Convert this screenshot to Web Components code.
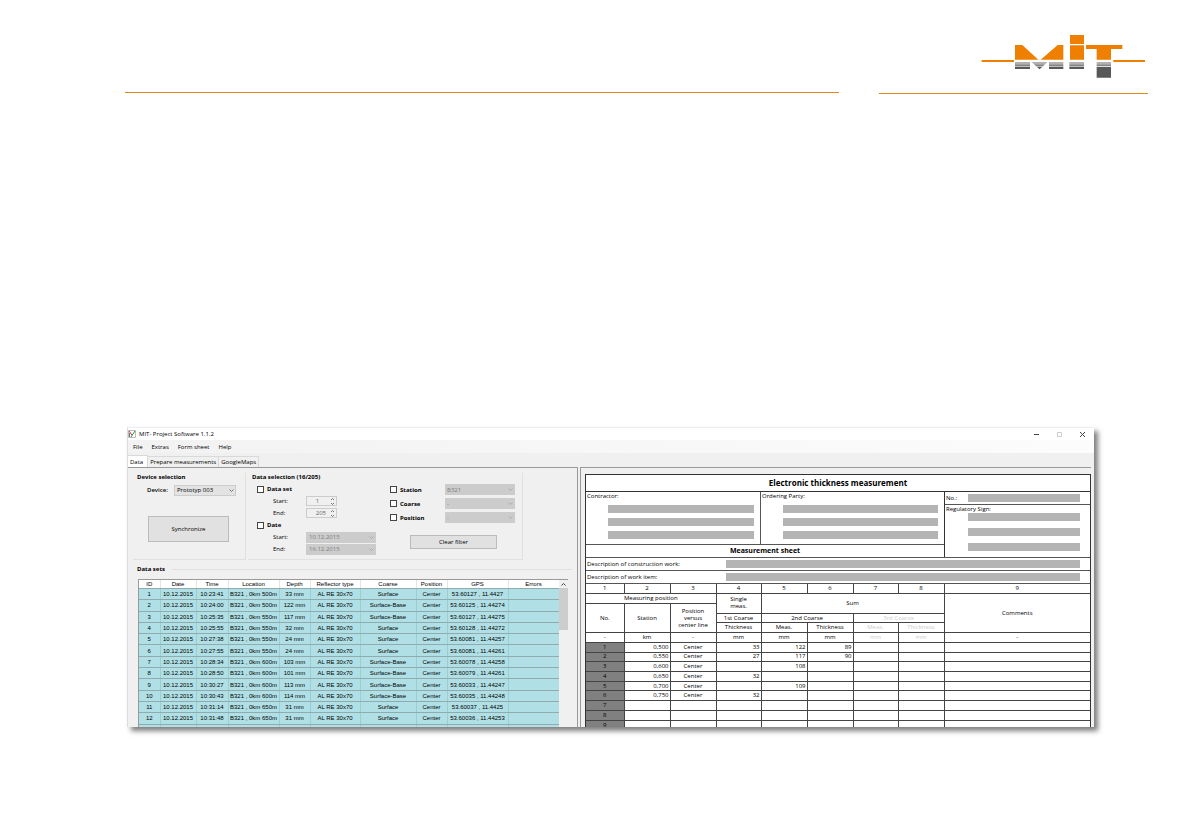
<!DOCTYPE html>
<html lang="en">
<head>
<meta charset="utf-8">
<title>MIT - Project Software</title>
<style>
  body {
    margin: 0;
    background: #fff;
    color: #000;
    font: 6px/8px "Open Sans", "Noto Sans", sans-serif;
  }
</style>
</head>
<body>
<manual-page>
  <mit-logo slot="logo"></mit-logo>
  <app-window caption="MIT- Project Software 1.1.2">
    <menu-bar slot="menu" items="File,Extras,Form sheet,Help"></menu-bar>
    <tab-strip slot="tabs" items="Data,Prepare measurements,GoogleMaps"></tab-strip>
    <data-pane slot="left"></data-pane>
    <measurement-sheet slot="right"></measurement-sheet>
  </app-window>
</manual-page>

<script>
const define = (name, render) => window.customElements.define(name, class extends HTMLElement {
  constructor() {
    super();
    this.attachShadow({ mode: 'open' }).innerHTML = `<style>
  * { box-sizing: border-box; }
  button, select, input { font: inherit; color: inherit; margin: 0; }
</style>${render(this)}`;
  }
});

/* Page with the two header rules and the logo */
define('manual-page', () => `<style>
  :host {
    display: flex;
    flex-direction: column;
    height: 100vh;
    box-sizing: border-box;
    padding-bottom: 112px;
    overflow: hidden;
  }

  header {
    display: grid;
    grid-template-columns: minmax(0, 1fr) 269px;
    column-gap: 40px;
    padding: 34px 43px 0 125px;
    flex: none;
  }

  .rule {
    border-bottom: 1px solid #e08a1c;
    height: 59px;
  }

  .brand {
    height: 60px;
    padding-left: 102px;
  }

  main {
    display: grid;
    grid-template-rows: minmax(0, 1fr);
    flex: 1;
    min-height: 0;
    margin: 333px 97px 0 127px;
  }
</style>
<header>
  <div class="rule"></div>
  <div class="rule brand"><slot name="logo"></slot></div>
</header>
<main><slot></slot></main>`);

define('mit-logo', () => `<style>
  :host { display: block; }
  svg { display: block; }
</style>
<svg width="165" height="45" viewBox="33 42 495 135" role="img" aria-label="MIT">
  <g fill="#ee7f00">
    <path d="M35 120h97v6H35zM430 120h95v6h-95z" />
    <path d="M135 75h22l48 44H135zM263 75h17v44h-68z" />
    <path d="M300 45h42v27h-42zM300 76h42v43h-42z" />
    <path d="M348 75h109v12h-34v32h-43V87h-32z" />
  </g>
  <g fill="#b3b0b2"><path d="M135 126h45v6h-45zM185 126h47l-6 6h-35zM237 126h43v6h-43zM298 126h44v6h-44zM380 126h43v6h-43z" /></g>
  <g fill="#858386"><path d="M135 133h45v6h-45zM192 133h33l-6 6h-21zM237 133h43v6h-43zM298 133h44v6h-44zM380 133h43v6h-43z" /></g>
  <g fill="#58585a"><path d="M135 140h45v7h-45zM200 140h17l-8 8zM237 140h43v7h-43zM298 140h44v7h-44zM380 141h43v32h-43z" /></g>
</svg>`);

/* Desktop window: caption bar, menu, tabs and two panes */
define('app-window', el => `<style>
  :host {
    display: flex;
    flex-direction: column;
    min-width: 0;
    background: #f0f0f0;
    border-top: 1px solid #eee;
    border-left: 1px solid #ddd;
    box-shadow: 4px 4px 5px rgba(0, 0, 0, .5);
  }

  .caption {
    display: flex;
    align-items: center;
    gap: 3px;
    height: 12px;
    padding-right: 8px;
    background: #fff;
    flex: none;
  }

  .title {
    flex: 1;
  }

  .caption button {
    display: block;
    padding: 0;
    border: 0;
    background: none;
    width: 7px;
    height: 7px;
    margin-left: 13px;
  }

  svg {
    display: block;
    fill: none;
    stroke: #444;
  }

  .panes {
    display: grid;
    grid-template-columns: 450px minmax(0, 1fr);
    grid-template-rows: minmax(0, 1fr);
    column-gap: 2px;
    padding-right: 3px;
    flex: 1;
    min-height: 0;
  }
</style>
<div class="caption">
  <svg width="8" height="8" viewBox="0 0 8 8">
    <path stroke="#bbb" d="M.5.5h7v7h-7z" />
    <path stroke="#c33" d="M1 1l3 4" />
    <path stroke="#2a8a4a" d="M3 7l4-6" />
    <path stroke="#777" d="M1.500 3v4" />
  </svg>
  <span class="title">${el.getAttribute('caption')}</span>
  <button aria-label="Minimize"><svg width="7" height="7"><path d="M1 3.500h5" /></svg></button>
  <button aria-label="Maximize"><svg width="7" height="7"><path stroke="#ccc" d="M1.500 1.500h4v4h-4z" /></svg></button>
  <button aria-label="Close"><svg width="7" height="7"><path d="M1 1l5 5M6 1L1 6" /></svg></button>
</div>
<slot name="menu"></slot>
<slot name="tabs"></slot>
<div class="panes">
  <slot name="left"></slot>
  <slot name="right"></slot>
</div>`);

define('menu-bar', el => `<style>
  :host {
    display: flex;
    align-items: center;
    gap: 9px;
    height: 13px;
    padding-left: 5px;
    background: linear-gradient(90deg, #f2f2f2, #fcfcfc);
    flex: none;
  }

  button {
    padding: 0;
    border: 0;
    background: none;
  }
</style>
${el.getAttribute('items').split(',').map(item => `<button>${item}</button>`).join('')}`);

define('tab-strip', el => `<style>
  :host {
    display: flex;
    align-items: flex-end;
    height: 14px;
    box-sizing: border-box;
    flex: none;
  }

  button {
    height: 11px;
    padding: 0 2px;
    border: 1px solid #d9d9d9;
    border-bottom: 0;
    border-left: 0;
    background: #f0f0f0;
  }

  button[aria-selected="true"] {
    height: 12px;
    padding: 0 4px 0 2px;
    background: #fff;
  }
</style>
${el.getAttribute('items').split(',').map((item, i) => `<button role="tab" aria-selected="${i === 0}">${item}</button>`).join('')}`);

define('group-box', el => `<style>
  :host {
    display: block;
    box-sizing: border-box;
    border: 1px solid #e0e0e0;
    border-width: 0 1px 1px 0;
  }

  h2 {
    margin: 0 0 2px;
    padding-left: 4px;
    font: inherit;
    font-weight: 700;
  }
</style>
<h2>${el.getAttribute('heading')}</h2>
<slot></slot>`);

const chevron = `<svg class="chevron" width="5" height="3" viewBox="0 0 5 3"><path d="M.5.5l2 2 2-2" /></svg>`;

/* One label with its control: kind is "select", "spin" or "date" */
define('form-field', el => {
  const kind = el.getAttribute('kind');
  const value = el.getAttribute('value');
  const controls = {
    select: `<select id="c"><option>${value}</option></select>${chevron}`,
    spin: `<input id="c" value="${value}" disabled><svg class="chevron" width="5" height="7" viewBox="0 0 5 7"><path d="M1 2l1.500-1.500L4 2M1 5l1.500 1.500L4 5" /></svg>`,
    date: `<select id="c" disabled><option>${value}</option></select>${chevron}`
  };
  return `<style>
  :host {
    display: flex;
    align-items: center;
    height: 12px;
  }

  label {
    width: var(--label-width, 33px);
    font-weight: var(--label-weight, 400);
    flex: none;
  }

  .control {
    display: grid;
    align-items: center;
    width: var(--control-width, 70px);
  }

  .control > * {
    grid-area: 1 / 1;
  }

  select, input {
    appearance: none;
    width: 100%;
    height: 11px;
    padding: 0 2px;
    border: 1px solid #ccc;
    border-radius: 0;
    background: #e3e3e3;
    opacity: 1;
  }

  select:disabled {
    background: #ccc;
    color: #808080;
  }

  input {
    height: 10px;
    padding-right: 10px;
    background: #f0f0f0;
    color: #666;
    text-align: ${value.length > 1 ? 'right' : 'center'};
  }

  .chevron {
    justify-self: end;
    margin-right: 2px;
    fill: none;
    stroke: ${kind === 'date' ? '#aaa' : '#777'};
    pointer-events: none;
  }
</style>
<label for="c">${el.getAttribute('label')}</label>
<span class="control">${controls[kind]}</span>`;
});

/* Filter tick box, with a drop-down after it when a value is given */
define('check-field', el => {
  const label = el.getAttribute('label');
  return `<style>
  :host {
    display: flex;
    align-items: center;
    gap: 3px;
    height: var(--row, 12px);
    font-weight: 700;
  }

  input {
    appearance: none;
    width: 7px;
    height: 7px;
    border: 1px solid #444;
    background: #fff;
    flex: none;
  }

  label {
    width: 42px;
    white-space: nowrap;
  }

  .control {
    display: grid;
    align-items: center;
    font-weight: 400;
    flex: 1;
  }

  .control > * {
    grid-area: 1 / 1;
  }

  select {
    appearance: none;
    height: 11px;
    padding: 0 2px;
    border: 0;
    border-radius: 0;
    background: #ccc;
    color: #808080;
    opacity: 1;
  }

  .chevron {
    justify-self: end;
    margin-right: 2px;
    fill: none;
    stroke: #aaa;
  }
</style>
<input type="checkbox" id="c"><label for="c">${label}</label>
${el.hasAttribute('value') ? `<span class="control"><select aria-label="${label} value" disabled><option>${el.getAttribute('value')}</option></select>${chevron}</span>` : ''}`;
});

/* Left pane: device, filters and the stored measurements */
define('data-pane', () => `<style>
  :host {
    display: flex;
    flex-direction: column;
    box-sizing: border-box;
    min-height: 0;
    padding: 5px 5px 0;
    border: 1px solid #999;
    border-width: 1px 1px 0 0;
    overflow: hidden;
  }

  .groups {
    display: grid;
    grid-template-columns: 113px 275px;
    column-gap: 2px;
    height: 87px;
    flex: none;
  }

  .device {
    --label-width: 27px;
    --label-weight: 600;
    --control-width: 62px;
    padding: 1px 0 0 14px;
  }

  button {
    display: block;
    padding: 0;
    border: 1px solid #bbb;
    background: #e1e1e1;
  }

  .sync {
    width: 81px;
    height: 26px;
    margin: 20px 0 0 1px;
  }

  .filters {
    display: grid;
    grid-template-columns: 119px 125px;
    column-gap: 14px;
    padding-left: 9px;
  }

  .indent {
    padding-left: 16px;
  }

  .spin {
    --control-width: 31px;
  }

  .values {
    --row: 11px;
    display: flex;
    flex-direction: column;
    gap: 3px;
    padding-top: 1px;
  }

  .clear {
    width: 87px;
    height: 14px;
    margin: 9px 0 0 20px;
  }

  h2 {
    display: flex;
    align-items: center;
    gap: 7px;
    margin: 5px 0 6px;
    padding-left: 4px;
    font: inherit;
    font-weight: 700;
  }

  h2::after {
    content: "";
    flex: 1;
    border-top: 1px solid #e0e0e0;
  }

  data-sets {
    margin: 0 4px 0 5px;
    flex: 1;
    min-height: 0;
  }
</style>
<div class="groups">
  <group-box heading="Device selection">
    <div class="device">
      <form-field kind="select" label="Device:" value="Prototyp 003"></form-field>
      <button class="sync">Synchronize</button>
    </div>
  </group-box>
  <group-box heading="Data selection (16/205)">
    <div class="filters">
      <div>
        <check-field label="Data set"></check-field>
        <div class="indent spin">
          <form-field kind="spin" label="Start:" value="1"></form-field>
          <form-field kind="spin" label="End:" value="205"></form-field>
        </div>
        <check-field label="Date"></check-field>
        <div class="indent">
          <form-field kind="date" label="Start:" value="10.12.2015"></form-field>
          <form-field kind="date" label="End:" value="16.12.2015"></form-field>
        </div>
      </div>
      <div class="values">
        <check-field label="Station" value="B321"></check-field>
        <check-field label="Coarse" value="-"></check-field>
        <check-field label="Position" value="-"></check-field>
        <button class="clear">Clear filter</button>
      </div>
    </div>
  </group-box>
</div>
<h2>Data sets</h2>
<data-sets></data-sets>`);

const dataSets = [
  ['10:23:41', '500', 33, 'Surface', '53.60127 , 11.4427'],
  ['10:24:00', '500', 122, 'Surface-Base', '53.60125 , 11.44274'],
  ['10:25:35', '550', 117, 'Surface-Base', '53.60127 , 11.44275'],
  ['10:25:55', '550', 32, 'Surface', '53.60128 , 11.44272'],
  ['10:27:38', '550', 24, 'Surface', '53.60081 , 11.44257'],
  ['10:27:55', '550', 24, 'Surface', '53.60081 , 11.44261'],
  ['10:28:34', '600', 103, 'Surface-Base', '53.60078 , 11.44258'],
  ['10:28:50', '600', 101, 'Surface-Base', '53.60079 , 11.44261'],
  ['10:30:27', '600', 113, 'Surface-Base', '53.60033 , 11.44247'],
  ['10:30:43', '600', 114, 'Surface-Base', '53.60035 , 11.44248'],
  ['10:31:14', '650', 31, 'Surface', '53.60037 , 11.4425'],
  ['10:31:48', '650', 31, 'Surface', '53.60036 , 11.44253']
];

const headings = ['ID', 'Date', 'Time', 'Location', 'Depth', 'Reflector type', 'Coarse', 'Position', 'GPS', 'Errors'];
const cells = values => values.map(value => `<td>${value}</td>`).join('');

define('data-sets', () => `<style>
  :host {
    display: flex;
    align-items: stretch;
    overflow: hidden;
    border-top: 1px solid #999;
    border-left: 1px solid #999;
    font-family: "Liberation Sans", Arial, sans-serif;
  }

  .view {
    flex: 1;
    min-width: 0;
    overflow: hidden;
  }

  table {
    width: 100%;
    height: 156px;
    border-collapse: collapse;
    table-layout: fixed;
  }

  th, td {
    padding: 0;
    text-align: center;
    white-space: nowrap;
    font-weight: 400;
    border-right: 1px solid #9ccdd0;
    border-bottom: 1px solid #8fabad;
  }

  th {
    background: #fff;
    border-right-color: #e5e5e5;
  }

  td {
    background: #b0e0e6;
  }

  .bar {
    width: 9px;
    flex: none;
  }

  .bar button {
    display: grid;
    place-items: center;
    width: 100%;
    height: 8px;
    padding: 0;
    border: 0;
    background: none;
  }

  svg {
    fill: none;
    stroke: #444;
  }

  .thumb {
    height: 42px;
    background: #cdcdcd;
  }
</style>
<div class="view">
  <table>
    <colgroup>${[21, 36, 32, 51, 31, 50, 56, 31, 61, 51].map(w => `<col style="width: ${w}px">`).join('')}</colgroup>
    <thead><tr>${headings.map(text => `<th>${text}</th>`).join('')}</tr></thead>
    <tbody>
      ${dataSets.map(([time, metre, depth, coarse, gps], i) => `<tr>${cells([
        i + 1, '10.12.2015', time, `B321 , 0km ${metre}m`, `${depth} mm`, 'AL RE 30x70', coarse, 'Center', gps, ''
      ])}</tr>`).join('')}
      <tr>${cells(Array(10).fill('&nbsp;'))}</tr>
    </tbody>
  </table>
</div>
<div class="bar">
  <button aria-label="Scroll up"><svg width="5" height="3" viewBox="0 0 5 3"><path d="M.5 2.500l2-2 2 2" /></svg></button>
  <div class="thumb"></div>
</div>`);

/* Field of the form sheet with blanked lines */
define('blank-field', el => `<style>
  :host {
    display: flex;
    flex-direction: var(--direction, column);
    gap: var(--gap, 5px);
    box-sizing: border-box;
    padding: var(--pad, 0 6px 5px 1px);
    border-bottom: 1px solid #555;
  }

  span {
    width: var(--text, auto);
    margin-bottom: var(--text-gap, 0);
    white-space: nowrap;
    flex: none;
  }

  i {
    display: block;
    height: 8px;
    margin-left: var(--indent, 0);
    background: #b4b4b4;
    flex: var(--grow, none);
  }
</style>
<span>${el.getAttribute('label')}</span>
${'<i></i>'.repeat(Number(el.getAttribute('lines')))}`);

const stations = [
  ['0,500', 'Center', 33, 122, 89],
  ['0,550', 'Center', 27, 117, 90],
  ['0,600', 'Center', '', 108, ''],
  ['0,650', 'Center', 32, '', ''],
  ['0,700', 'Center', '', 109, ''],
  ['0,750', 'Center', 32, '', ''],
  ['', '', '', '', ''],
  ['', '', '', '', ''],
  ['', '', '', '', '']
];

define('measurement-sheet', () => `<style>
  :host {
    display: block;
    box-sizing: border-box;
    min-height: 0;
    padding: 6px 0 0 4px;
    border: 1px solid #999;
    border-width: 1px 0 0 1px;
    overflow: hidden;
  }

  .sheet {
    background: #fff;
    border: 1px solid #333;
    border-bottom: 0;
  }

  h1, h2 {
    margin: 0;
    border-bottom: 1px solid #333;
    font-size: 8px;
    line-height: 16px;
    text-align: center;
  }

  h2 {
    border: 0;
    font-size: 7px;
    line-height: 12px;
  }

  .top {
    display: grid;
    grid-template-columns: 358px minmax(0, 1fr);
    border-bottom: 1px solid #555;
  }

  .parties {
    display: grid;
    grid-template-columns: 175px 183px;
    --indent: 21px;
    height: 53px;
  }

  .parties blank-field:first-child {
    border-right: 1px solid #555;
  }

  .number, .wide {
    --direction: row;
    --grow: 1;
    --gap: 0;
    --text: 22px;
    --pad: 2px 10px 2px 1px;
  }

  .wide {
    --text: 139px;
  }

  .sign {
    --indent: 22px;
    --gap: 7px;
    --text-gap: -7px;
    --pad: 0 10px 0 1px;
    border-bottom: 0;
  }

  .right {
    border-left: 1px solid #333;
  }

  table {
    width: 100%;
    height: 146px;
    border-collapse: collapse;
    border-style: hidden;
    table-layout: fixed;
  }

  tr {
    height: 9px;
  }

  th, td {
    padding: 0 1px;
    border: 1px solid #444;
    font-weight: 400;
    line-height: 7px;
    text-align: center;
    white-space: nowrap;
  }

  .num {
    text-align: right;
  }

  .row {
    background: #808080;
  }

  .off {
    color: #ccc;
  }
</style>
<div class="sheet">
  <h1>Electronic thickness measurement</h1>
  <div class="top">
    <div>
      <div class="parties">
        <blank-field label="Contractor:" lines="3"></blank-field>
        <blank-field label="Ordering Party:" lines="3"></blank-field>
      </div>
      <h2>Measurement sheet</h2>
    </div>
    <div class="right">
      <blank-field class="number" label="No.:" lines="1"></blank-field>
      <blank-field class="sign" label="Regulatory Sign:" lines="3"></blank-field>
    </div>
  </div>
  <blank-field class="wide" label="Description of construction work:" lines="1"></blank-field>
  <blank-field class="wide" label="Description of work item:" lines="1"></blank-field>
  <table>
    <colgroup>${[38, 46, 46, 45, 46, 46, 45, 46].map(w => `<col style="width: ${w}px">`).join('')}<col></colgroup>
    <tbody>
      <tr>${[1, 2, 3, 4, 5, 6, 7, 8, 9].map(n => `<th>${n}</th>`).join('')}</tr>
      <tr>
        <th colspan="3">Measuring position</th>
        <th rowspan="2">Single<br>meas.</th>
        <th colspan="4" rowspan="2">Sum</th>
        <th rowspan="4">Comments</th>
      </tr>
      <tr>
        <th rowspan="3">No.</th>
        <th rowspan="3">Station</th>
        <th rowspan="3">Position<br>versus<br>center line</th>
      </tr>
      <tr>
        <th>1st Coarse</th>
        <th colspan="2">2nd Coarse</th>
        <th colspan="2" class="off">3rd Coarse</th>
      </tr>
      <tr>
        <th>Thickness</th>
        <th>Meas.</th>
        <th>Thickness</th>
        <th class="off">Meas.</th>
        <th class="off">Thickness</th>
      </tr>
      <tr>
        <th>-</th><th>km</th><th>-</th><th>mm</th><th>mm</th><th>mm</th>
        <th class="off">mm</th><th class="off">mm</th><th>-</th>
      </tr>
      ${stations.map(([station, position, first, second, thickness], i) => `<tr>
        <td class="row">${i + 1}</td>
        <td class="num">${station}</td>
        <td>${position}</td>
        <td class="num">${first}</td>
        <td class="num">${second}</td>
        <td class="num">${thickness}</td>
        <td></td><td></td><td></td>
      </tr>`).join('')}
    </tbody>
  </table>
</div>`);
</script>
</body>
</html>
